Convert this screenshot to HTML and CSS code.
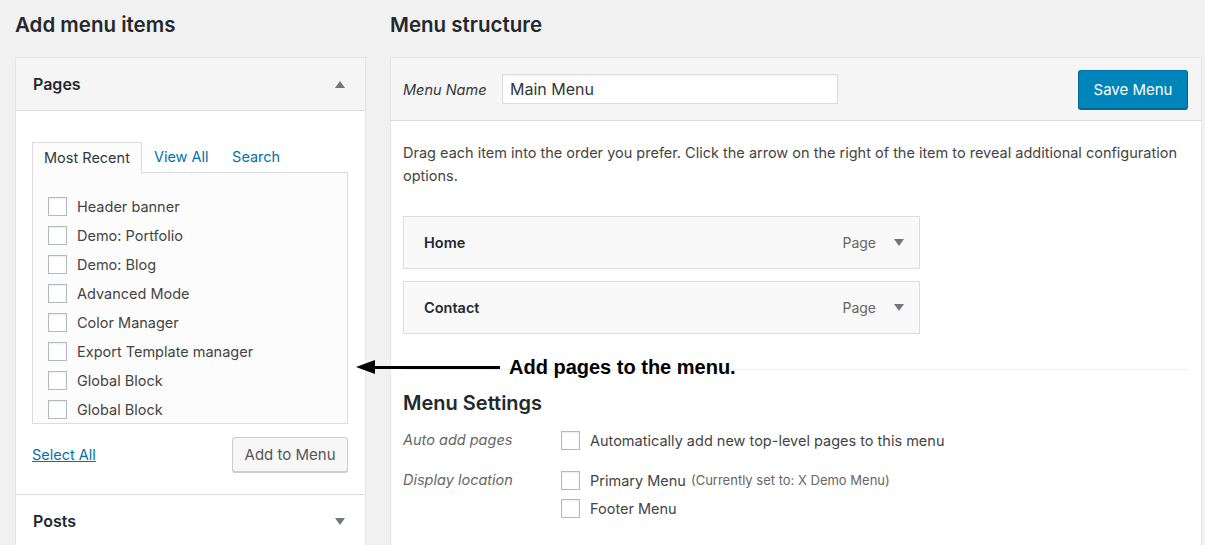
FILE: index.html
```html
<!DOCTYPE html>
<html>
<head>
  <title>Menus</title>
  <link rel="stylesheet" href="styles.css">
</head>
<body>
  <div class="nav-menus">
    <div class="menu-side">
      <h2 class="col-title">Add menu items</h2>
      <div class="accordion">
        <div class="acc-section">
          <h3 class="acc-title">Pages <span class="caret caret-up"></span></h3>
          <div class="acc-content">
            <ul class="tabs">
              <li class="tab active">Most Recent</li>
              <li class="tab"><a href="#">View All</a></li>
              <li class="tab"><a href="#">Search</a></li>
            </ul>
            <div class="tab-panel">
              <ul class="checklist">
                <li><label><input type="checkbox"> Header banner</label></li>
                <li><label><input type="checkbox"> Demo: Portfolio</label></li>
                <li><label><input type="checkbox"> Demo: Blog</label></li>
                <li><label><input type="checkbox"> Advanced Mode</label></li>
                <li><label><input type="checkbox"> Color Manager</label></li>
                <li><label><input type="checkbox"> Export Template manager</label></li>
                <li><label><input type="checkbox"> Global Block</label></li>
                <li><label><input type="checkbox"> Global Block</label></li>
              </ul>
            </div>
            <div class="acc-actions">
              <a href="#" class="select-all">Select All</a>
              <button class="btn">Add to Menu</button>
            </div>
          </div>
        </div>
        <div class="acc-section">
          <h3 class="acc-title">Posts <span class="caret caret-down"></span></h3>
        </div>
      </div>
    </div>

    <div class="menu-main">
      <h2 class="col-title">Menu structure</h2>
      <div class="menu-edit">
        <div class="menu-header">
          <label class="menu-name">
            <span class="menu-name-label">Menu Name</span>
            <input type="text" class="menu-name-input" value="Main Menu">
          </label>
          <button class="btn btn-primary">Save Menu</button>
        </div>
        <div class="menu-body">
          <p class="menu-help">Drag each item into the order you prefer. Click the arrow on the right of the item to reveal additional configuration options.</p>

          <ul class="menu-items">
            <li class="menu-item">
              <span class="item-title">Home</span>
              <span class="item-type">Page</span>
              <span class="caret caret-down"></span>
            </li>
            <li class="menu-item">
              <span class="item-title">Contact</span>
              <span class="item-type">Page</span>
              <span class="caret caret-down"></span>
            </li>
          </ul>

          <div class="menu-settings">
            <h3>Menu Settings</h3>
            <div class="setting-row">
              <div class="setting-label">Auto add pages</div>
              <div class="setting-input">
                <label><input type="checkbox"> Automatically add new top-level pages to this menu</label>
              </div>
            </div>
            <div class="setting-row">
              <div class="setting-label">Display location</div>
              <div class="setting-input">
                <label><input type="checkbox"> Primary Menu <span class="location-note">(Currently set to: X Demo Menu)</span></label>
                <label><input type="checkbox"> Footer Menu</label>
              </div>
            </div>
          </div>
        </div>
      </div>
    </div>

    <!-- pointer from the text to the pages box -->
    <div class="callout">
      <span class="callout-head"></span>
      <span class="callout-line"></span>
      <span class="callout-text">Add pages to the menu.</span>
    </div>
  </div>
</body>
</html>
```

FILE: styles.css
```css
body {
  margin: 0;
  background-color: #f1f1f1;
  color: #444;
  font-family: "Inter", "Liberation Sans", sans-serif;
  font-size: 14.5px;
  overflow: hidden;
}

ul {
  list-style: none;
  margin: 0;
  padding: 0;
}

a {
  color: #0073aa;
  text-decoration: none;
}

.nav-menus {
  position: relative;
  display: flex;
  gap: 24px;
  padding: 10px 3px 0 15px;
}

.menu-side {
  width: 351px;
  flex: none;
}

.menu-main {
  flex: 1;
}

.col-title {
  margin: 0 0 19px;
  padding-top: 1px;
  font-size: 20.5px;
  font-weight: 600;
  line-height: 27px;
  color: #23282d;
}

/* left accordion */
.accordion {
  background-color: #fff;
  border: 1px solid #e5e5e5;
}

.acc-section + .acc-section {
  border-top: 1px solid #ddd;
}

.acc-title {
  display: flex;
  align-items: center;
  justify-content: space-between;
  height: 52px;
  margin: 0;
  padding: 0 20px 0 17px;
  background-color: #f5f5f5;
  font-size: 16px;
  font-weight: 600;
  color: #23282d;
}

.acc-section:last-child .acc-title {
  background-color: #fff;
}

.acc-content {
  border-top: 1px solid #ddd;
  padding: 31px 17px 22px 16px;
}

.caret {
  width: 0;
  height: 0;
  border-left: 5px solid transparent;
  border-right: 5px solid transparent;
}

.caret-up {
  border-bottom: 7px solid #72777c;
}

.caret-down {
  border-top: 7px solid #72777c;
}

.tabs {
  display: flex;
  height: 30px;
}

.tab {
  padding: 0 11.5px 0 12px;
  line-height: 30px;
  color: #32373c;
}

.tab.active {
  background-color: #fcfcfc;
  border: 1px solid #ddd;
  border-bottom: none;
  position: relative;
  z-index: 1;
  height: 31px;
  padding: 0 11px;
}

.tab-panel {
  height: 252px;
  box-sizing: border-box;
  overflow: hidden;
  background-color: #fcfcfc;
  border: 1px solid #ddd;
  padding: 19px 15px 0;
}

.checklist li label {
  display: flex;
  align-items: center;
  height: 29px;
  color: #444;
}

input[type="checkbox"] {
  appearance: none;
  width: 19px;
  height: 19px;
  margin: 0 10px 0 0;
  flex: none;
  background-color: #fff;
  border: 1px solid #b4b9be;
  box-shadow: inset 0 1px 2px rgba(0, 0, 0, 0.08);
}

.acc-actions {
  display: flex;
  align-items: center;
  justify-content: space-between;
  margin-top: 13px;
}

.select-all {
  text-decoration: underline;
}

.btn {
  height: 35px;
  padding: 0 11.5px;
  font-family: inherit;
  font-size: 15px;
  color: #555;
  background-color: #f7f7f7;
  border: 1px solid #ccc;
  border-radius: 3px;
  box-shadow: 0 1px 0 #ccc;
}

.btn-primary {
  height: 39px;
  padding: 0 14.5px;
  color: #fff;
  background-color: #0085ba;
  border-color: #0073aa #006799 #006799;
  box-shadow: 0 1px 0 #006799;
}

/* right side: menu editor */
.menu-edit {
  background-color: #fff;
  border: 1px solid #e5e5e5;
  height: 600px;
}

.menu-header {
  display: flex;
  align-items: center;
  justify-content: space-between;
  height: 62px;
  padding: 0 13px 0 12px;
  background-color: #f5f5f5;
  border-bottom: 1px solid #ddd;
}

.menu-name {
  display: flex;
  align-items: center;
}

.menu-name-label {
  width: 99px;
  font-style: italic;
  color: #32373c;
}

.menu-name-input {
  width: 336px;
  height: 30px;
  box-sizing: border-box;
  padding: 0 7px;
  font-family: inherit;
  font-size: 16px;
  color: #32373c;
  border: 1px solid #ddd;
  box-shadow: inset 0 1px 2px rgba(0, 0, 0, 0.07);
}

.menu-body {
  padding: 20px 13px 0 12px;
}

.menu-help {
  margin: 0 0 29px;
  line-height: 23px;
}

.menu-item {
  display: flex;
  align-items: center;
  width: 517px;
  height: 53px;
  box-sizing: border-box;
  margin-bottom: 12px;
  padding: 0 15px 0 20px;
  background-color: #f9f9f9;
  border: 1px solid #ddd;
}

.item-title {
  flex: 1;
  font-weight: 600;
  color: #23282d;
}

.item-type {
  margin-right: 18px;
  font-size: 14px;
  color: #666;
}

.menu-settings {
  margin-top: 35px;
  border-top: 1px solid #eee;
}

.menu-settings h3 {
  margin: 20px 0 10px;
  font-size: 20px;
  font-weight: 600;
  line-height: 26px;
  color: #23282d;
}

.setting-row {
  display: flex;
  margin-bottom: 12px;
}

.setting-label {
  width: 158px;
  line-height: 28px;
  font-style: italic;
  color: #666;
}

.setting-input label {
  display: flex;
  align-items: center;
  height: 28px;
}

.location-note {
  margin-left: 5px;
  font-size: 13px;
  color: #666;
}

/* annotation arrow */
.callout {
  position: absolute;
  top: 356px;
  left: 356px;
  display: flex;
  align-items: center;
  height: 22px;
}

.callout-head {
  width: 0;
  height: 0;
  border-right: 19px solid #000;
  border-top: 7px solid transparent;
  border-bottom: 7px solid transparent;
}

.callout-line {
  width: 125px;
  height: 3px;
  background-color: #000;
}

.callout-text {
  margin-left: 9px;
  font-family: "Liberation Sans", Arial, sans-serif;
  font-size: 20px;
  font-weight: bold;
  color: #000;
}
```
